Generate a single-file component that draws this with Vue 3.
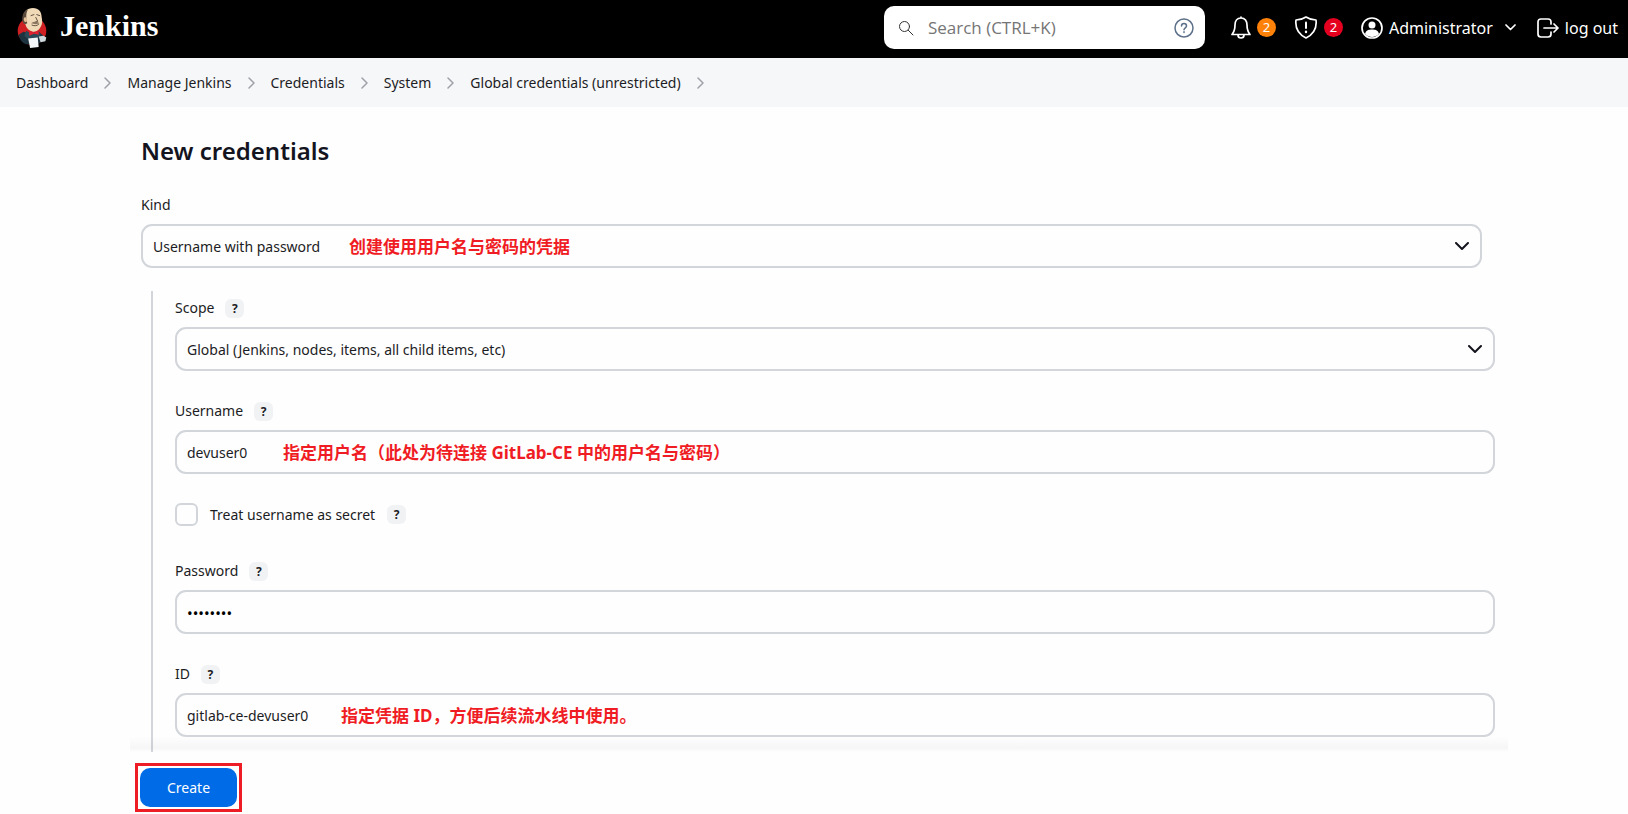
<script setup>
import { ref } from 'vue'

const crumbs = ['Dashboard', 'Manage Jenkins', 'Credentials', 'System', 'Global credentials (unrestricted)']
const search = ref('')
const kind = ref('Username with password')
const scope = ref('Global (Jenkins, nodes, items, all child items, etc)')
const username = ref('devuser0')
const secret = ref(false)
const password = ref('password')
const credentialId = ref('gitlab-ce-devuser0')
</script>

<template>
  <div class="page">
    <header class="header">
      <a class="brand" href="#">
        <svg class="logo" viewBox="0 0 34 44" aria-hidden="true">
          <ellipse cx="17" cy="25" rx="15" ry="14.500" fill="#d01f22" />
          <path d="M3 29c1 5 4 9 8 10h12c4-2 6-6 6-9l-5-4-8 2-8-2z" fill="#1d3440" />
          <path d="M11 25l6 3 7-3 2 4-8 9-9-8z" fill="#2b4a58" />
          <path d="M8 12C7 5 12 1 18 1c6 0 9 4 9 9 1 5 1 8-1 11-2 4-5 5-8 5-4-1-7-4-8-8-2-1-3-3-2-6z" fill="#f0d9b7" />
          <path d="M8 17C5 11 8 4 13 2c-2 3-2 6-2 9l1 6-2 1z" fill="#5b4a3c" />
          <path d="M9 11c2-1 3 1 3 4l-2 1c-2-1-2-4-1-5z" fill="#e2bd96" />
          <path d="M16 9l3-1M22 8l3 1M21 11l2 4-3 1M17 19c3 1 5 1 7-1" fill="none" stroke="#5b4a3c" stroke-width="1" />
          <path d="M16 17c3-2 6-2 9 0l-4 1z" fill="#8a7660" />
          <path d="M14 25l5 2 5-3v5l-5-1-5 2z" fill="#e01f2f" />
          <path d="M13 33l10-1 1 10-9 1z" fill="#f4f7f9" />
          <path d="M24 31l5-1 3 2-1 4-5 1z" fill="#cfd8dd" />
        </svg>
        <span class="wordmark">Jenkins</span>
      </a>

      <div class="search">
        <svg class="search-icon" viewBox="0 0 16 16" aria-hidden="true">
          <circle cx="6.500" cy="6.500" r="5" />
          <path d="M10.300 10.300L15 15" />
        </svg>
        <input v-model="search" type="search" aria-label="Search" placeholder="Search (CTRL+K)">
        <a class="search-help" href="#" aria-label="Search help">
          <svg viewBox="0 0 20 20" aria-hidden="true">
            <circle cx="10" cy="10" r="9" />
            <path d="M7.500 8c0-3.300 5-3.300 5 0 0 1.800-2.500 1.800-2.500 3.700" />
            <path d="M10 13.800v.800" />
          </svg>
        </a>
      </div>

      <nav class="actions" aria-label="Account">
        <button class="action alert" type="button" aria-label="Notifications">
          <svg class="bell" viewBox="0 0 20 23" aria-hidden="true">
            <path d="M10 2c-4 0-6 3-6 7 0 5-1 7-3 9.500h18C17 16 16 14 16 9c0-4-2-7-6-7zM10 2V1M7 19c0 4 6 4 6 0" />
          </svg>
          <span class="badge orange">2</span>
        </button>
        <button class="action alert" type="button" aria-label="Security warnings">
          <svg class="shield" viewBox="0 0 24 23" aria-hidden="true">
            <path d="M12 1c3 2 6 3 10 3 1 8-2 14-10 18C4 18 1 12 2 4c4 0 7-1 10-3z" />
            <path d="M12 6.500v5.500" stroke-width="2" />
            <path d="M12 15.800v.200" stroke-width="2.400" />
          </svg>
          <span class="badge red">2</span>
        </button>
        <button class="action user" type="button">
          <svg class="person" viewBox="0 0 22 22" aria-hidden="true">
            <circle cx="11" cy="11" r="10" />
            <circle class="solid" cx="11" cy="8" r="3.500" />
            <path class="solid" d="M4 17c1-4 4-4.500 7-4.500s6 .500 7 4.500c-4 4-10 4-14 0z" />
          </svg>
          <span>Administrator</span>
          <svg class="caret" viewBox="0 0 11 7" aria-hidden="true"><path d="M1 1l4.500 4.500L10 1" /></svg>
        </button>
        <a class="action logout" href="#">
          <svg class="exit" viewBox="0 0 22 20" aria-hidden="true">
            <path d="M14 6V4c0-2-1-3-3-3H4C2 1 1 2 1 4v12c0 2 1 3 3 3h7c2 0 3-1 3-3v-2M7 10h14M17 6l4 4-4 4" />
          </svg>
          <span>log out</span>
        </a>
      </nav>
    </header>

    <nav class="crumbs" aria-label="Breadcrumb">
      <template v-for="crumb in crumbs" :key="crumb">
        <a href="#">{{ crumb }}</a>
        <svg viewBox="0 0 7 12" aria-hidden="true"><path d="M1 1l5 5-5 5" /></svg>
      </template>
    </nav>

    <main class="main">
      <h1>New credentials</h1>
      <form @submit.prevent>
        <div class="field">
          <div class="label-row"><label for="kind">Kind</label></div>
          <div class="control">
            <select id="kind" v-model="kind"><option>Username with password</option></select>
            <svg class="arrow" viewBox="0 0 14 9" aria-hidden="true"><path d="M1 1l6 6 6-6" /></svg>
            <span class="note note-kind">创建使用用户名与密码的凭据</span>
          </div>
        </div>

        <div class="nested">
          <div class="field">
            <div class="label-row">
              <label for="scope">Scope</label>
              <button class="help" type="button" aria-label="Help for Scope">?</button>
            </div>
            <div class="control">
              <select id="scope" v-model="scope">
                <option>Global (Jenkins, nodes, items, all child items, etc)</option>
              </select>
              <svg class="arrow" viewBox="0 0 14 9" aria-hidden="true"><path d="M1 1l6 6 6-6" /></svg>
            </div>
          </div>

          <div class="field">
            <div class="label-row">
              <label for="username">Username</label>
              <button class="help" type="button" aria-label="Help for Username">?</button>
            </div>
            <div class="control">
              <input id="username" v-model="username" type="text">
              <span class="note note-user">指定用户名（此处为待连接 GitLab-CE 中的用户名与密码）</span>
            </div>
          </div>

          <div class="check-row">
            <input id="secret" v-model="secret" type="checkbox">
            <label for="secret">Treat username as secret</label>
            <button class="help" type="button" aria-label="Help for Treat username as secret">?</button>
          </div>

          <div class="field">
            <div class="label-row">
              <label for="password">Password</label>
              <button class="help" type="button" aria-label="Help for Password">?</button>
            </div>
            <div class="control">
              <input id="password" v-model="password" type="password">
            </div>
          </div>

          <div class="field">
            <div class="label-row">
              <label for="cred-id">ID</label>
              <button class="help" type="button" aria-label="Help for ID">?</button>
            </div>
            <div class="control">
              <input id="cred-id" v-model="credentialId" type="text">
              <span class="note note-id">指定凭据 ID，方便后续流水线中使用。</span>
            </div>
          </div>
        </div>

        <div class="bottom-bar">
          <div class="frame"><button class="create" type="submit">Create</button></div>
        </div>
      </form>
    </main>
  </div>
</template>

<style>
body {
  margin: 0;
  background: #fefefe;
}
</style>

<style scoped>
.page {
  font-family: "Noto Sans", "Noto Sans CJK SC", sans-serif;
  font-size: 14px;
  line-height: 22px;
  color: #1c1c24;
}
.page * { box-sizing: border-box; }
button, input, select { font: inherit; color: inherit; margin: 0; }
a { color: inherit; text-decoration: none; }
svg { display: block; flex: none; fill: none; stroke: currentColor; stroke-linecap: round; stroke-linejoin: round; }

.header {
  display: flex;
  align-items: center;
  height: 58px;
  padding: 0 10px 3px 15px;
  background: #000;
  color: #fff;
}
.brand { display: flex; align-items: center; gap: 11px; margin-right: auto; }
.logo { width: 34px; height: 42px; stroke: none; }
.wordmark { font: bold 30px/40px "Liberation Serif", serif; padding-bottom: 4px; }

.search {
  display: flex;
  align-items: center;
  width: 321px;
  height: 43px;
  padding: 0 11px 0 14px;
  border-radius: 10px;
  background: #fff;
  color: #333;
}
.search-icon { width: 16px; height: 16px; }
.search input {
  flex: 1;
  min-width: 0;
  padding: 0 14px;
  border: 0;
  outline: 0;
  background: none;
  font-family: "Open Sans", sans-serif;
  font-size: 17px;
}
.search input::placeholder { color: #757575; opacity: 1; }
.search-help { color: #5d7089; }
.search-help svg { width: 20px; height: 20px; stroke-width: 1.5; }

.actions { display: flex; align-items: center; gap: 18px; margin-left: 26px; font-size: 16px; }
.action {
  display: flex;
  align-items: center;
  gap: 6px;
  padding: 0;
  border: 0;
  background: none;
  stroke-width: 1.7;
}
.bell { width: 20px; height: 23px; }
.shield { width: 24px; height: 23px; }
.person { width: 22px; height: 22px; }
.person .solid { fill: currentColor; stroke: none; }
.caret { width: 11px; height: 7px; margin-left: 6px; }
.exit { width: 22px; height: 20px; }
.logout { margin-left: 3px; }
.badge { width: 19px; height: 19px; border-radius: 50%; font-size: 13px; line-height: 19px; text-align: center; }
.orange { background: #fe820a; }
.red { background: #e6001f; }

.crumbs {
  display: flex;
  align-items: center;
  gap: 16px;
  height: 49px;
  padding: 0 16px;
  background: #f6f7f9;
}
.crumbs svg { width: 7px; height: 12px; color: #a0a0a8; stroke-width: 1.5; }

.main { padding: 28px 146px 0 141px; }
h1 { margin: 0 0 27px; font-size: 24px; line-height: 32px; font-weight: 600; color: #14141f; }

.field { margin-bottom: 28px; }
.label-row { display: flex; align-items: center; gap: 11px; height: 22px; margin-bottom: 8px; }
.nested .field, .nested .check-row { margin-top: 1px; }
.help {
  width: 19px;
  height: 19px;
  padding: 0;
  border: 0;
  border-radius: 6px;
  background: #f0f2f4;
  font-size: 12px;
  font-weight: 700;
  line-height: 19px;
}
.control { position: relative; }
.control input, .control select {
  display: block;
  width: 100%;
  height: 44px;
  padding: 1px 10px 0;
  border: 2px solid #d2d5da;
  border-radius: 11px;
  outline: 0;
  background: #fefefe;
  appearance: none;
}
.control input[type="password"] { font-size: 15px; color: #000; }
.arrow { position: absolute; right: 13px; top: 18px; width: 14px; height: 9px; stroke-width: 2; color: #14141f; pointer-events: none; }
.note {
  position: absolute;
  top: 12px;
  color: #f01c24;
  font-size: 17px;
  font-weight: 700;
  white-space: nowrap;
  pointer-events: none;
}
.note-kind { left: 208px; }
.note-user { left: 108px; }
.note-id { left: 166px; }

.nested {
  display: flow-root;
  margin: -5px -13px 0 10px;
  padding: 5px 0 15px 22px;
  border-left: 2px solid #d2d5da;
}
.nested .field { display: flow-root; margin: 0 0 28px; padding-top: 1px; }
.nested .field:last-child { margin-bottom: 0; }
.nested .check-row { margin: 0 0 33px; padding-top: 1px; height: 24px; }
.check-row { display: flex; align-items: center; gap: 12px; }
.check-row input {
  width: 23px;
  height: 23px;
  border: 2px solid #d2d5da;
  border-radius: 6px;
  background: #fefefe;
  appearance: none;
}

.bottom-bar { position: relative; margin: 0 -26px 0 -11px; padding: 11px 0 0 5px; }
.bottom-bar::before {
  content: "";
  position: absolute;
  left: 0;
  right: 0;
  top: -16px;
  height: 16px;
  background: linear-gradient(transparent, rgba(0, 0, 0, 0.03) 75%, transparent);
  pointer-events: none;
}
.frame { width: fit-content; padding: 2px; border: 3px solid #ee1c25; background: #fff; }
.create {
  display: block;
  height: 39px;
  padding: 1px 27px 0;
  border: 0;
  border-radius: 10px;
  background: #006be6;
  color: #fff;
}
</style>
